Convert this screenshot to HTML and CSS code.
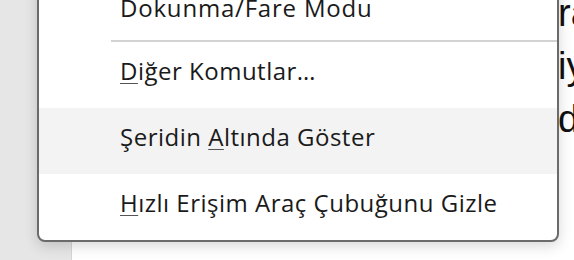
FILE: index.html
```html
<!DOCTYPE html>
<html lang="tr">
<head>
<meta charset="utf-8">
<link rel="stylesheet" href="styles.css">
</head>
<body>
<div class="app">
  <aside class="sidebar"></aside>
  <main class="doc">
    <p class="doc-line">rak</p>
    <p class="doc-line">iyi</p>
    <p class="doc-line">de</p>
  </main>
  <div class="menu" role="menu">
    <div class="item item-first">Dokunma/Fare Modu</div>
    <div class="sep"></div>
    <div class="item"><u>D</u>iğer Komutlar…</div>
    <div class="item item-hover">Şeridin <u>A</u>ltında Göster</div>
    <div class="item"><u>H</u>ızlı Erişim Araç Çubuğunu Gizle</div>
  </div>
</div>
</body>
</html>
```
FILE: styles.css
```css
html, body {
  margin: 0;
  padding: 0;
}
body {
  width: 574px;
  height: 260px;
  overflow: hidden;
  background: #ffffff;
}
.app {
  position: relative;
  display: flex;
  width: 574px;
  height: 260px;
  overflow: hidden;
}
.sidebar {
  width: 71px;
  flex: none;
  background: #e6e6e6;
  border-right: 1px solid #d6d6d6;
}
.doc {
  flex: 1;
  background: #ffffff;
  padding-left: 486px;
  margin-top: -13px;
  white-space: nowrap;
  font-family: "Liberation Sans", Arial, sans-serif;
  font-size: 38px;
  line-height: 53px;
  color: #111;
}
.doc-line {
  margin: 0;
}
.menu {
  position: absolute;
  left: 37px;
  top: -23px;
  width: 522px;
  box-sizing: border-box;
  background: #ffffff;
  border: 2px solid #6b6b6b;
  border-radius: 8px;
  box-shadow: 0 4px 14px rgba(0, 0, 0, 0.16);
  font-family: "Open Sans", "Noto Sans", sans-serif;
  font-size: 24px;
  letter-spacing: 0.5px;
  color: #1a1a1a;
  overflow: hidden;
}
.item {
  height: 66px;
  box-sizing: border-box;
  padding-left: 81px;
  padding-bottom: 8px;
  line-height: 58px;
  white-space: nowrap;
}
.item-first {
  height: 61px;
  letter-spacing: 0.8px;
}
.item-hover {
  background: #f3f3f3;
}
.item u {
  text-decoration-thickness: 1px;
  text-underline-offset: 3px;
  text-decoration-color: #555;
}
.sep {
  height: 2px;
  margin-left: 72px;
  background: #d2d2d2;
}
```
